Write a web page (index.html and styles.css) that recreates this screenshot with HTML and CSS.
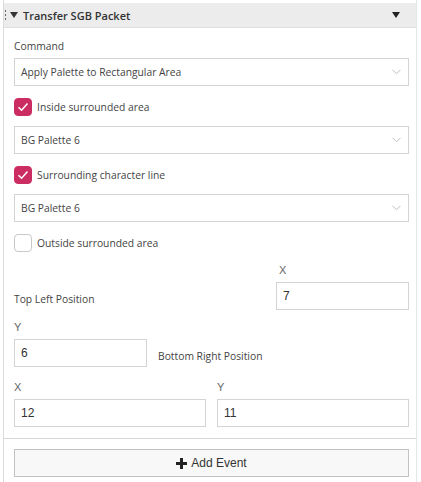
FILE: index.html
```html
<!DOCTYPE html>
<html>
<head>
<meta charset="utf-8">
<link rel="stylesheet" href="styles.css">
</head>
<body>
<div class="panel">
  <div class="header">
    <svg class="grip" width="3" height="10" viewBox="0 0 3 10"><rect x="1" y="0" width="1" height="2" fill="#666"/><rect x="1" y="4" width="1" height="2" fill="#666"/><rect x="1" y="8" width="1" height="2" fill="#666"/></svg>
    <svg class="caret" width="8" height="6" viewBox="0 0 8 6"><path d="M0 0 H8 L4 6 Z" fill="#333"/></svg>
    <span class="title">Transfer SGB Packet</span>
    <svg class="menu" width="8" height="6" viewBox="0 0 8 6"><path d="M0 0 H8 L4 6 Z" fill="#222"/></svg>
  </div>
  <div class="content">
    <div class="label">Command</div>
    <div class="select">Apply Palette to Rectangular Area<svg class="chev" width="9" height="6" viewBox="0 0 9 6"><path d="M0.5 0.8 L4.5 4.8 L8.5 0.8" fill="none" stroke="#bdbdbd" stroke-width="1"/></svg></div>

    <div class="check-row"><span class="box on"><svg width="12" height="10" viewBox="0 0 12 10"><path d="M1.5 5.2 L4.6 8.2 L10.5 1.6" fill="none" stroke="#fff" stroke-width="1.5"/></svg></span>Inside surrounded area</div>
    <div class="select">BG Palette 6<svg class="chev" width="9" height="6" viewBox="0 0 9 6"><path d="M0.5 0.8 L4.5 4.8 L8.5 0.8" fill="none" stroke="#bdbdbd" stroke-width="1"/></svg></div>

    <div class="check-row"><span class="box on"><svg width="12" height="10" viewBox="0 0 12 10"><path d="M1.5 5.2 L4.6 8.2 L10.5 1.6" fill="none" stroke="#fff" stroke-width="1.5"/></svg></span>Surrounding character line</div>
    <div class="select">BG Palette 6<svg class="chev" width="9" height="6" viewBox="0 0 9 6"><path d="M0.5 0.8 L4.5 4.8 L8.5 0.8" fill="none" stroke="#bdbdbd" stroke-width="1"/></svg></div>

    <div class="check-row"><span class="box"></span>Outside surrounded area</div>

    <div class="row row1">
      <div class="side-label">Top Left Position</div>
      <div class="field">
        <div class="small-label">X</div>
        <div class="input">7</div>
      </div>
    </div>
    <div class="row row2">
      <div class="field">
        <div class="small-label">Y</div>
        <div class="input">6</div>
      </div>
      <div class="side-label">Bottom Right Position</div>
    </div>
    <div class="row row3">
      <div class="field">
        <div class="small-label">X</div>
        <div class="input">12</div>
      </div>
      <div class="field">
        <div class="small-label">Y</div>
        <div class="input">11</div>
      </div>
    </div>
  </div>
  <div class="footer">
    <div class="button"><svg width="11" height="11" viewBox="0 0 11 11"><path d="M4 0 H7 V4 H11 V7 H7 V11 H4 V7 H0 V4 H4 Z" fill="#222"/></svg><span>Add Event</span></div>
  </div>
</div>
</body>
</html>
```

FILE: styles.css
```css
html, body {
  margin: 0;
  padding: 0;
  background: #fff;
}

body {
  font-family: "Open Sans", "Noto Sans", sans-serif;
  font-size: 10.3px;
  color: #444;
}

.panel {
  margin-left: 3px;
  width: 414px;
  height: 482px;
  border-left: 1px solid #dcdcdc;
  border-right: 1px solid #e6e6e6;
  padding-top: 3px;
  box-sizing: border-box;
}

.header {
  height: 24px;
  background: #ececec;
  border-bottom: 1px solid #e0e0e0;
  display: flex;
  align-items: center;
  font-size: 11px;
  color: #333;
}

.grip {
  margin-left: 0;
  display: block;
}

.caret {
  margin-left: 3px;
  display: block;
}

.title {
  margin-left: 5px;
  font-weight: 600;
  color: #333;
}

.menu {
  margin-left: auto;
  margin-right: 16px;
  display: block;
}

.content {
  padding: 8px 7px 0 10px;
}

.label {
  line-height: 20px;
  color: #444;
}

.select {
  margin-top: 2px;
  height: 28px;
  border: 1px solid #d4d4d4;
  box-sizing: border-box;
  display: flex;
  align-items: center;
  padding-left: 6px;
  padding-right: 7px;
  color: #444;
}

.chev {
  margin-left: auto;
}

.check-row + .select {
  margin-top: 10px;
}

.check-row {
  margin-top: 12px;
  height: 18px;
  display: flex;
  align-items: center;
  color: #444;
}

.box {
  width: 18px;
  height: 18px;
  box-sizing: border-box;
  border: 1px solid #c8c8c8;
  border-radius: 4px;
  margin-right: 5px;
  display: flex;
  align-items: center;
  justify-content: center;
  background: #fff;
}

.box.on {
  background: #cb2d62;
  border-color: #cb2d62;
}

.row {
  display: grid;
  column-gap: 10px;
}

.row1 {
  margin-top: 8px;
  grid-template-columns: 1fr 133px;
}

.row2 {
  margin-top: 7px;
  grid-template-columns: 133px 1fr;
}

.row3 {
  margin-top: 10px;
  grid-template-columns: 1fr 1fr;
  column-gap: 11px;
}

.side-label {
  align-self: end;
  line-height: 27px;
  height: 27px;
  padding-top: 3px;
  box-sizing: border-box;
  color: #444;
}

.row2 .side-label {
  padding-left: 1px;
}

.small-label {
  font-family: "Liberation Sans", Arial, sans-serif;
  font-size: 11px;
  line-height: 20px;
  color: #666;
}

.row1 .small-label {
  padding-left: 3px;
}

.input {
  margin-top: 2px;
  height: 28px;
  border: 1px solid #d4d4d4;
  box-sizing: border-box;
  display: flex;
  align-items: center;
  padding-left: 6px;
  font-family: "Liberation Sans", Arial, sans-serif;
  font-size: 12px;
  color: #333;
}

.footer {
  margin-top: 11px;
  border-top: 1px solid #d8d8d8;
  padding: 10px 7px 0 10px;
}

.button {
  height: 28px;
  box-sizing: border-box;
  border: 1px solid #c2c2c2;
  background: #f8f8f8;
  display: flex;
  align-items: center;
  justify-content: center;
  gap: 4px;
  font-family: "Liberation Sans", Arial, sans-serif;
  font-size: 12px;
  color: #333;
}
```
